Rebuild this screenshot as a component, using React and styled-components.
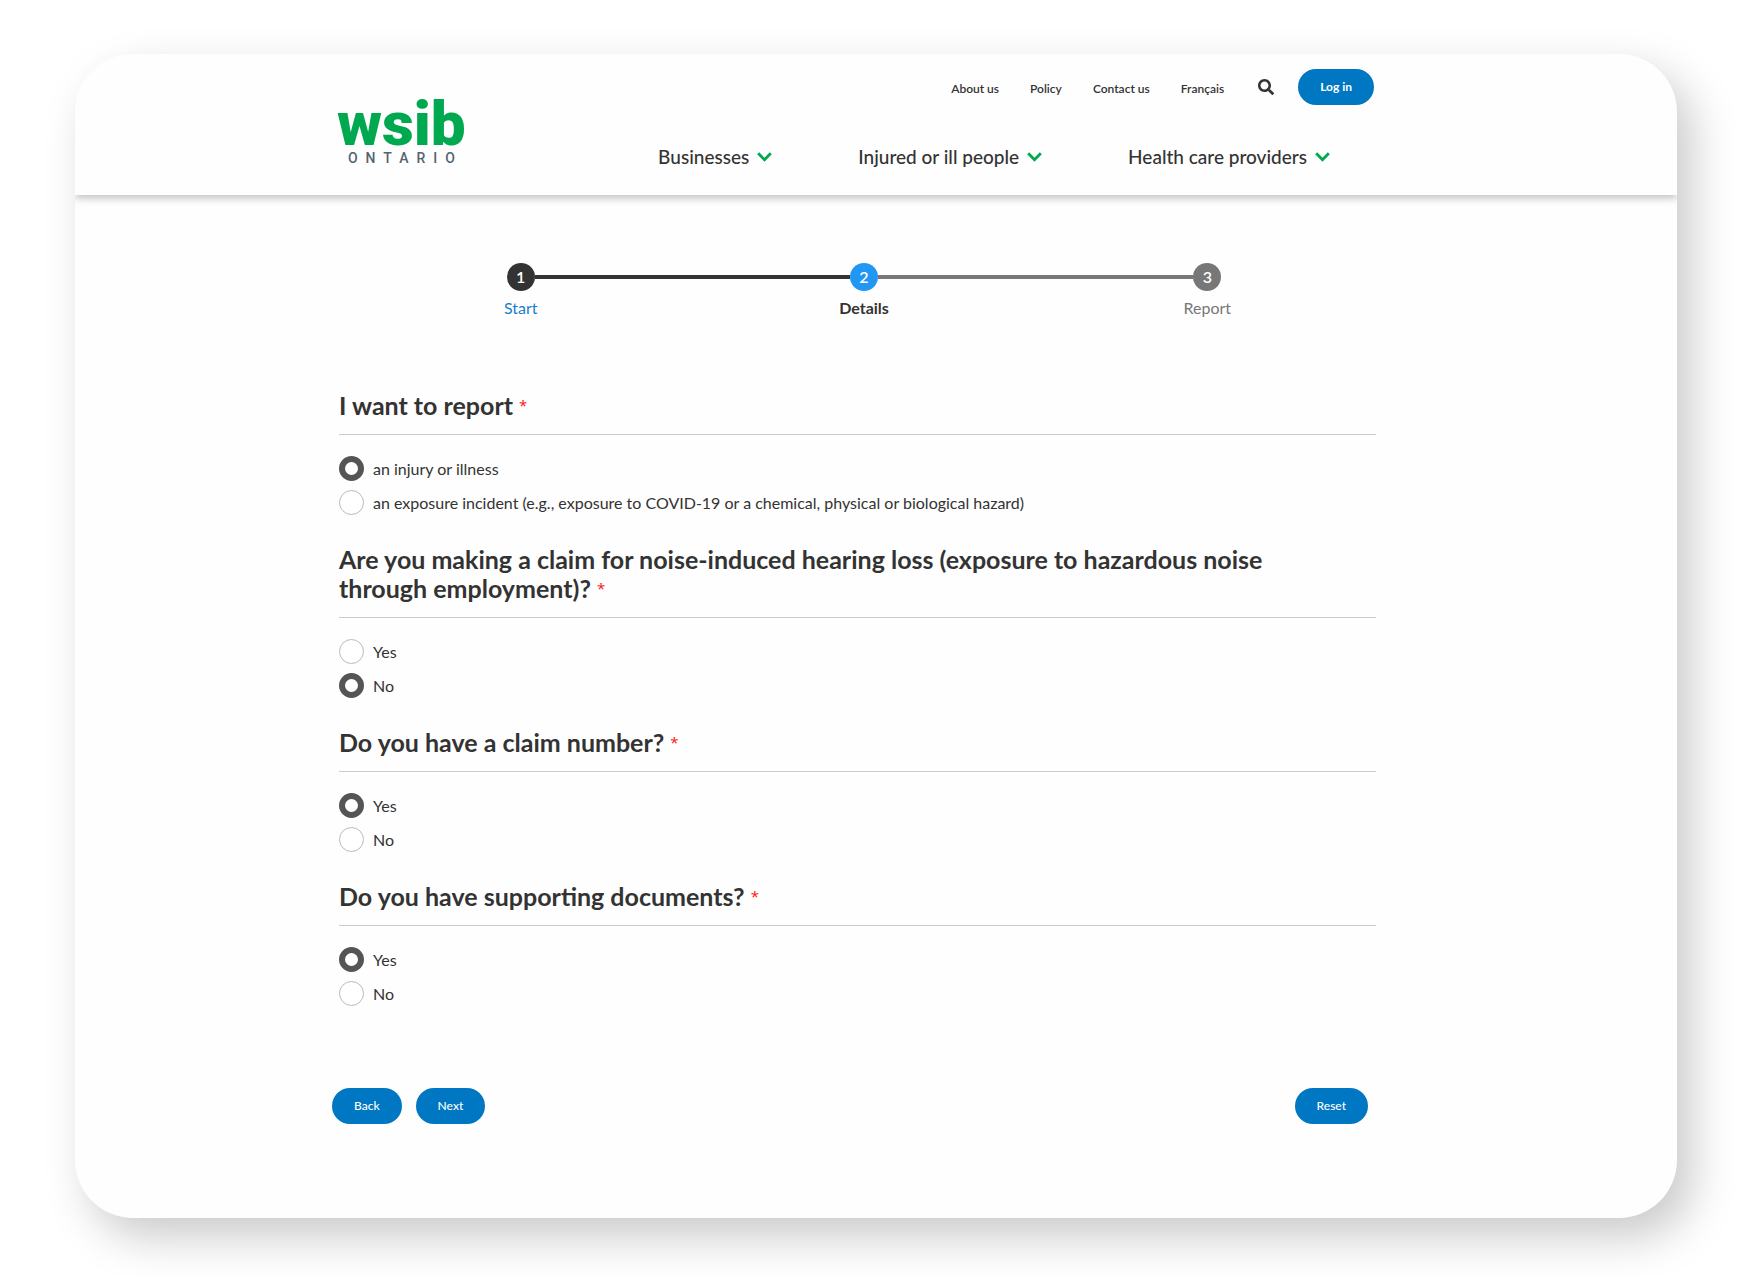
import React, { useState } from "react";
import styled, { createGlobalStyle } from "styled-components";
import { FaSearch } from "react-icons/fa";

const GlobalStyle = createGlobalStyle`
  *, *::before, *::after { box-sizing: border-box; }
  body {
    margin: 0;
    background: #fff;
    color: #333;
    font-family: Lato, "Open Sans", sans-serif;
  }
  button, input { font-family: inherit; }
`;

const Page = styled.div`
  padding: 54px 78px 57px 75px;
`;

const Card = styled.div`
  overflow: hidden;
  border-radius: 58px;
  background: #fefefe;
  box-shadow: 15px 19px 45px rgba(0, 0, 0, 0.21);
`;

const Header = styled.header`
  display: flex;
  justify-content: space-between;
  padding: 15px 303px 26px 262px;
  box-shadow: 0 3px 8px rgba(0, 0, 0, 0.25);
`;

const Logo = styled.a`
  display: flex;
  flex-direction: column;
  align-items: center;
  padding-top: 27px;
  text-decoration: none;
  font-family: Roboto, sans-serif;
`;

const LogoWord = styled.span`
  color: #00a94f;
  font-size: 62px;
  font-weight: 900;
  line-height: 55px;
`;

const LogoPlace = styled.span`
  padding-left: 8px;
  color: #56636f;
  font-size: 14px;
  font-weight: 500;
  line-height: 14px;
  letter-spacing: 8px;
`;

const HeaderNav = styled.div`
  display: flex;
  flex-direction: column;
  align-items: flex-end;
  gap: 40px;
`;

const TopNav = styled.nav`
  display: flex;
  align-items: center;
  gap: 31px;
`;

const TopLink = styled.a`
  color: #333;
  font-size: 12px;
  font-weight: 600;
  line-height: 16px;
  padding-top: 4px;
  text-decoration: none;
`;

const SearchButton = styled.button`
  display: flex;
  padding: 0;
  margin: 0 -7px 0 3px;
  border: 0;
  background: none;
  color: #333;
  font-size: 16px;
`;

const PillButton = styled.button`
  height: 36px;
  padding: 0 22px;
  border: 0;
  border-radius: 18px;
  background: #0077c2;
  color: #fff;
  font-size: 12px;
  font-weight: ${(p) => (p.$strong ? 700 : 500)};
  line-height: 16px;
  cursor: pointer;
`;

const MainNav = styled.nav`
  display: flex;
  gap: 86px;
  padding-right: 44px;
`;

const MenuButton = styled.button`
  display: flex;
  align-items: center;
  gap: 8px;
  padding: 0;
  border: 0;
  background: none;
  color: #333;
  font-size: 19px;
  font-weight: 500;
  line-height: 24px;
  cursor: pointer;
`;

const Main = styled.main`
  padding: 68px 301px 94px 264px;
`;

const Steps = styled.ol`
  display: grid;
  grid-template-columns: repeat(3, 1fr);
  margin: 0 -3px 74px 10px;
  padding: 0;
  list-style: none;
`;

const Step = styled.li`
  display: flex;
  flex-direction: column;
  gap: 7px;
  text-align: center;
`;

const Track = styled.div`
  display: flex;
  align-items: center;
`;

const Segment = styled.span`
  flex: 1;
  height: 4px;
  background: ${(p) => p.$color};
`;

const Dot = styled.span`
  width: 28px;
  height: 28px;
  border-radius: 50%;
  background: ${(p) => p.$color};
  color: #fff;
  font-size: 16px;
  font-weight: 600;
  line-height: 28px;
`;

const StepLabel = styled.span`
  color: ${(p) => p.$color};
  font-size: 16px;
  font-weight: ${(p) => (p.$current ? 700 : 400)};
  line-height: 19px;
`;

const StepLink = styled.a`
  color: inherit;
  text-decoration: none;
`;

const Question = styled.fieldset`
  min-width: 0;
  margin: 0 0 30px;
  padding: 0;
  border: 0;
`;

const Legend = styled.legend`
  width: 100%;
  margin-bottom: 21px;
  padding: 0 32px 14px 0;
  border-bottom: 1px solid #ccc;
  font-size: 25px;
  font-weight: 700;
  line-height: 29px;
`;

const Required = styled.span`
  color: #ff1010;
  font-family: "Open Sans", sans-serif;
  font-size: 15px;
  font-weight: 400;
  line-height: 16px;
  vertical-align: 4px;
`;

const Options = styled.div`
  display: grid;
  gap: 9px;
`;

const Option = styled.label`
  display: flex;
  align-items: center;
  gap: 9px;
  font-size: 16px;
  line-height: 25px;
`;

const Radio = styled.input`
  appearance: none;
  flex: none;
  width: 25px;
  height: 25px;
  margin: 0;
  border: 1px solid #bbb;
  border-radius: 50%;
  background: #fff;
  &:checked {
    border: 6px solid #555;
  }
`;

const Actions = styled.div`
  display: flex;
  gap: 14px;
  margin: 82px 8px 0 -7px;
`;

const ResetButton = styled(PillButton)`
  margin-left: auto;
`;

const Chevron = () => (
  <svg width="15" height="10" viewBox="0 0 15 10" fill="none" aria-hidden="true">
    <path d="M1.2 1.2 L7.5 7.8 L13.8 1.2" stroke="#00a94f" strokeWidth="2.8" />
  </svg>
);

const questions = [
  {
    id: "report",
    title: "I want to report",
    options: [
      "an injury or illness",
      "an exposure incident (e.g., exposure to COVID-19 or a chemical, physical or biological hazard)",
    ],
    initial: 0,
  },
  {
    id: "hearing",
    title:
      "Are you making a claim for noise-induced hearing loss (exposure to hazardous noise through employment)?",
    options: ["Yes", "No"],
    initial: 1,
  },
  { id: "claim", title: "Do you have a claim number?", options: ["Yes", "No"], initial: 0 },
  { id: "documents", title: "Do you have supporting documents?", options: ["Yes", "No"], initial: 0 },
];

function QuestionGroup({ question }) {
  const [selected, setSelected] = useState(question.initial);
  return (
    <Question>
      <Legend>
        {question.title} <Required>*</Required>
      </Legend>
      <Options>
        {question.options.map((text, i) => (
          <Option key={text} htmlFor={`${question.id}-${i}`}>
            <Radio
              type="radio"
              id={`${question.id}-${i}`}
              name={question.id}
              checked={selected === i}
              onChange={() => setSelected(i)}
            />
            {text}
          </Option>
        ))}
      </Options>
    </Question>
  );
}

export default function App() {
  return (
    <>
      <GlobalStyle />
      <Page>
        <Card>
          <Header>
            <Logo href="#home">
              <LogoWord>wsib</LogoWord>
              <LogoPlace>ONTARIO</LogoPlace>
            </Logo>
            <HeaderNav>
              <TopNav>
                {["About us", "Policy", "Contact us", "Français"].map((text) => (
                  <TopLink key={text} href="#top">{text}</TopLink>
                ))}
                <SearchButton type="button" aria-label="Search"><FaSearch /></SearchButton>
                <PillButton type="button" $strong>Log in</PillButton>
              </TopNav>
              <MainNav>
                {["Businesses", "Injured or ill people", "Health care providers"].map((text) => (
                  <MenuButton key={text} type="button">{text}<Chevron /></MenuButton>
                ))}
              </MainNav>
            </HeaderNav>
          </Header>
          <Main>
            <Steps>
              <Step>
                <Track>
                  <Segment $color="transparent" />
                  <Dot $color="#333">1</Dot>
                  <Segment $color="#333" />
                </Track>
                <StepLabel $color="#1a7fc9"><StepLink href="#start">Start</StepLink></StepLabel>
              </Step>
              <Step aria-current="step">
                <Track>
                  <Segment $color="#333" />
                  <Dot $color="#2196f3">2</Dot>
                  <Segment $color="#777" />
                </Track>
                <StepLabel $color="#333" $current>Details</StepLabel>
              </Step>
              <Step>
                <Track>
                  <Segment $color="#777" />
                  <Dot $color="#777">3</Dot>
                  <Segment $color="transparent" />
                </Track>
                <StepLabel $color="#777">Report</StepLabel>
              </Step>
            </Steps>
            <form onSubmit={(e) => e.preventDefault()}>
              {questions.map((q) => <QuestionGroup key={q.id} question={q} />)}
              <Actions>
                <PillButton type="button">Back</PillButton>
                <PillButton type="submit">Next</PillButton>
                <ResetButton type="button">Reset</ResetButton>
              </Actions>
            </form>
          </Main>
        </Card>
      </Page>
    </>
  );
}
